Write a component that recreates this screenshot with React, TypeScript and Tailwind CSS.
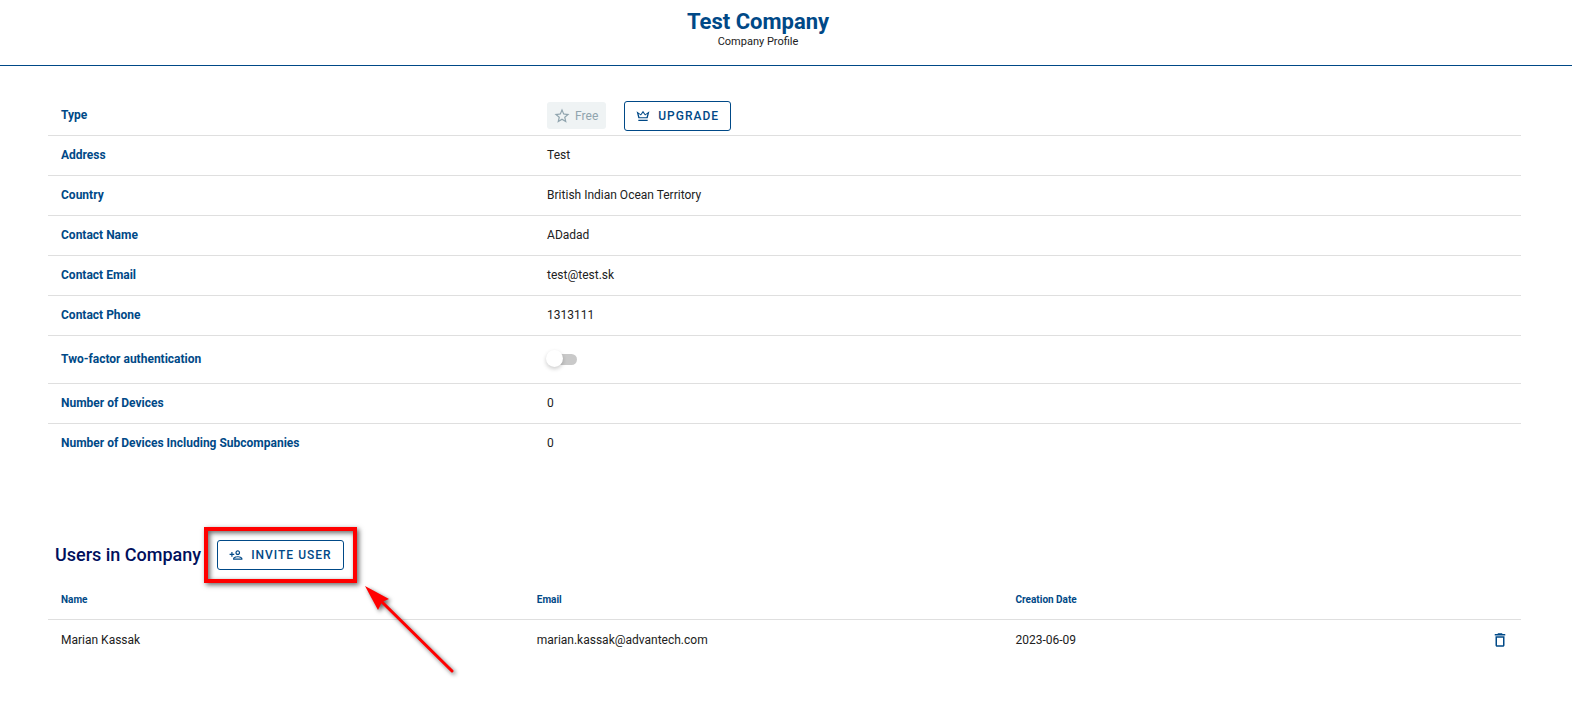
import { useState } from 'react';
import type { ReactNode } from 'react';
import { MdDeleteOutline, MdOutlinePersonAdd, MdStarBorder } from 'react-icons/md';

function CrownIcon() {
  return (
    <svg viewBox="0 0 24 24" className="size-3.5" fill="currentColor" aria-hidden="true">
      <path d="M4 16L1 4l7 5L12 3l4 6L23 4l-3 12H4m2-2h12l1.6-6-4 3L12 6.5l-3.6 4.5-4-3L6 14M20 18.5v2H4v-2h16z" />
    </svg>
  );
}

function OutlineButton({ icon, children }: { icon: ReactNode; children: ReactNode }) {
  return (
    <button
      type="button"
      className="flex h-[30px] items-center gap-2 rounded-[3px] border border-[#004987] bg-white px-[11px] text-xs font-medium tracking-[1px] text-[#004987] uppercase"
    >
      {icon}
      {children}
    </button>
  );
}

function Toggle() {
  const [on, setOn] = useState(false);
  return (
    <label htmlFor="two-factor" className="relative -ml-px flex h-[18px] w-8 cursor-pointer items-center">
      <input
        id="two-factor"
        type="checkbox"
        role="switch"
        aria-label="Two-factor authentication"
        checked={on}
        onChange={(e) => setOn(e.target.checked)}
        className="peer ml-1 h-[11px] w-[27px] cursor-pointer appearance-none rounded-full bg-[#c9c9c9] checked:bg-[#7fa4c3]"
      />
      <span className="absolute top-0 left-0 size-[17px] rounded-full bg-white shadow-[0_2px_4px_rgba(0,0,0,0.2)] peer-checked:left-4" />
    </label>
  );
}

const details: { label: string; value: ReactNode; tall?: boolean }[] = [
  {
    label: 'Type',
    value: (
      <div className="flex items-center gap-[18px] pt-0.5">
        <span className="flex h-[27px] items-center gap-1 rounded-[3px] bg-[#eff3f4] px-2 text-[#90a4ae]">
          <MdStarBorder className="-ml-0.5 size-[18px]" />
          Free
        </span>
        <OutlineButton icon={<CrownIcon />}>Upgrade</OutlineButton>
      </div>
    ),
  },
  { label: 'Address', value: 'Test' },
  { label: 'Country', value: 'British Indian Ocean Territory' },
  { label: 'Contact Name', value: 'ADadad' },
  { label: 'Contact Email', value: 'test@test.sk' },
  { label: 'Contact Phone', value: '1313111' },
  { label: 'Two-factor authentication', value: <Toggle />, tall: true },
  { label: 'Number of Devices', value: '0' },
  { label: 'Number of Devices Including Subcompanies', value: '0' },
];

export default function App() {
  return (
    <div className="min-h-screen bg-white font-['Roboto',sans-serif] text-xs text-[#212121]">
      <header className="flex flex-col items-center border-b border-[#004987] pt-[9px] pr-14 pb-4">
        <h1 className="text-[22px] leading-[26px] font-bold text-[#004987]">Test Company</h1>
        <p className="text-[11px] leading-[14px]">Company Profile</p>
      </header>

      <main className="pt-[29px] pr-[51px] pl-12">
        <table className="w-full table-fixed border-collapse">
          <tbody>
            {details.map((row) => (
              <tr
                key={row.label}
                className={`border-b border-[#dfdfdf] last:border-b-0 ${row.tall ? 'h-12' : 'h-10'}`}
              >
                <th scope="row" className="w-[33%] py-0 pr-3 pl-[13px] text-left font-bold text-[#004987]">
                  {row.label}
                </th>
                <td className="px-[13px] py-0">{row.value}</td>
              </tr>
            ))}
          </tbody>
        </table>

        <section className="pt-[68px]">
          <div className="flex h-12 items-center gap-4 pl-[7px]">
            <h2 className="text-lg font-medium text-[#000f5c]">Users in Company</h2>
            <div className="relative">
              <OutlineButton icon={<MdOutlinePersonAdd className="size-3.5" />}>
                Invite User
              </OutlineButton>
              <div className="pointer-events-none absolute -inset-[13px] border-4 border-[#ff0000] shadow-[2px_2px_5px_rgba(0,0,0,0.6),inset_2px_2px_5px_rgba(0,0,0,0.6)]" />
              <svg
                viewBox="0 0 100 100"
                className="pointer-events-none absolute top-[42px] left-[144px] size-[100px] overflow-visible drop-shadow-[2px_2px_2px_rgba(0,0,0,0.6)]"
                aria-hidden="true"
              >
                <path d="M20 19L91 89" stroke="#f00" strokeWidth="3" strokeLinecap="round" />
                <path d="M4 4L28 17L21 20L17 28Z" fill="#f00" />
              </svg>
            </div>
          </div>

          <table className="w-full table-fixed border-collapse">
            <thead>
              <tr className="h-10 border-b border-[#dfdfdf] text-left text-[10px] text-[#004987]">
                <th scope="col" className="w-[32.3%] px-[13px] pt-0.5 pb-0 font-bold">Name</th>
                <th scope="col" className="w-[32.5%] px-[13px] pt-0.5 pb-0 font-bold">Email</th>
                <th scope="col" className="px-[13px] pt-0.5 pb-0 font-bold">Creation Date</th>
                <th scope="col" className="w-12" aria-label="Actions" />
              </tr>
            </thead>
            <tbody>
              <tr className="h-10">
                <td className="px-[13px] pt-0.5 pb-0">Marian Kassak</td>
                <td className="px-[13px] pt-0.5 pb-0">marian.kassak@advantech.com</td>
                <td className="px-[13px] pt-0.5 pb-0">2023-06-09</td>
                <td className="pt-0.5 pr-3 pb-0">
                  <button type="button" aria-label="Delete user" className="ml-auto block text-[#004987]">
                    <MdDeleteOutline className="size-[18px]" />
                  </button>
                </td>
              </tr>
            </tbody>
          </table>
        </section>
      </main>
    </div>
  );
}
